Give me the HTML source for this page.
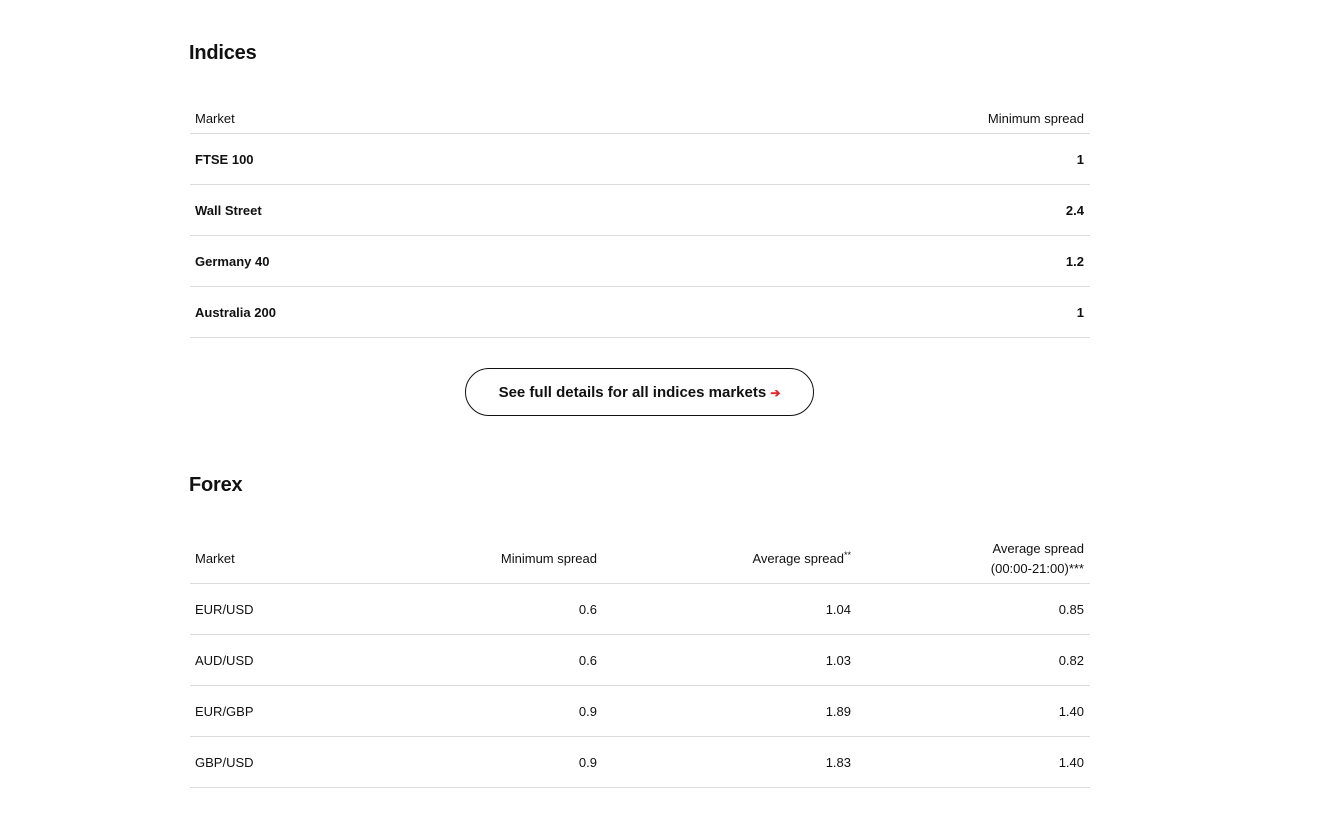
<!DOCTYPE html><html><head><style>
body{margin:0;width:1332px;height:813px;background:#fff;font-family:"Liberation Sans",sans-serif;color:#111;position:relative;overflow:hidden}
.a{position:absolute;white-space:nowrap}
h2{position:absolute;margin:0;font-size:20px;font-weight:bold;left:189px;letter-spacing:-0.2px}
.t{font-size:13px;line-height:16px}
.line{position:absolute;left:190px;width:900px;height:1px;background:#ddd}
.b{font-weight:bold}
.r{text-align:right}
sup{font-size:9px;line-height:0;vertical-align:5px}
</style></head><body>
<h2 style="top:42px">Indices</h2>
<div class="a t" style="left:195px;top:111px">Market</div>
<div class="a t" style="right:248px;top:111px">Minimum spread</div>
<div class="line" style="top:133px"></div>
<div class="a t b" style="left:195px;top:152px">FTSE 100</div><div class="a t b" style="right:248px;top:152px">1</div>
<div class="line" style="top:184px"></div>
<div class="a t b" style="left:195px;top:203px">Wall Street</div><div class="a t b" style="right:248px;top:203px">2.4</div>
<div class="line" style="top:235px"></div>
<div class="a t b" style="left:195px;top:254px">Germany 40</div><div class="a t b" style="right:248px;top:254px">1.2</div>
<div class="line" style="top:286px"></div>
<div class="a t b" style="left:195px;top:305px">Australia 200</div><div class="a t b" style="right:248px;top:305px">1</div>
<div class="line" style="top:337px"></div>
<div class="a" style="left:465px;top:368px;width:347px;height:46px;border:1px solid #111;border-radius:24px;font-size:15px;font-weight:bold;line-height:48px;text-align:center">See full details for all indices markets <span style="color:#e0262b;font-size:12px">➔</span></div>
<h2 style="top:474px">Forex</h2>
<div class="a t" style="left:195px;top:551px">Market</div>
<div class="a t" style="right:735px;top:551px">Minimum spread</div>
<div class="a t" style="right:481px;top:551px">Average spread<sup>**</sup></div>
<div class="a t r" style="right:248px;top:539px;line-height:20px">Average spread<br>(00:00-21:00)***</div>
<div class="line" style="top:583px"></div>
<div class="line" style="top:634px"></div>
<div class="line" style="top:685px"></div>
<div class="line" style="top:736px"></div>
<div class="line" style="top:787px"></div>
<div class="a t" style="left:195px;top:602px">EUR/USD</div><div class="a t" style="right:735px;top:602px">0.6</div><div class="a t" style="right:481px;top:602px">1.04</div><div class="a t" style="right:248px;top:602px">0.85</div>
<div class="a t" style="left:195px;top:653px">AUD/USD</div><div class="a t" style="right:735px;top:653px">0.6</div><div class="a t" style="right:481px;top:653px">1.03</div><div class="a t" style="right:248px;top:653px">0.82</div>
<div class="a t" style="left:195px;top:704px">EUR/GBP</div><div class="a t" style="right:735px;top:704px">0.9</div><div class="a t" style="right:481px;top:704px">1.89</div><div class="a t" style="right:248px;top:704px">1.40</div>
<div class="a t" style="left:195px;top:755px">GBP/USD</div><div class="a t" style="right:735px;top:755px">0.9</div><div class="a t" style="right:481px;top:755px">1.83</div><div class="a t" style="right:248px;top:755px">1.40</div>
</body></html>
